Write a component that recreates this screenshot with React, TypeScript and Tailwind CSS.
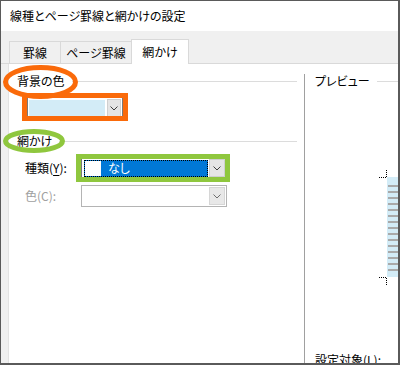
import React from "react";

function Chevron({ color = "#404040" }: { color?: string }) {
  return (
    <svg width="8" height="5" viewBox="0 0 8 5">
      <polyline points="0.5,0.5 4,4 7.5,0.5" fill="none" stroke={color} strokeWidth="1" />
    </svg>
  );
}

function SectionLabel({ label }: { label: string }) {
  return (
    <div className="flex h-[12px] items-center">
      <span className="shrink-0 whitespace-nowrap">{label}</span>
      <div className="ml-[7px] h-px flex-1 bg-[#dcdcdc]" />
    </div>
  );
}

function PagePreview() {
  const stripes = Array.from({ length: 15 }, (_, i) => 16 + i * 6);
  return (
    <svg width="20" height="118" className="ml-[64px] mt-[82px] shrink-0">
      <line x1="0" y1="8.5" x2="7" y2="8.5" stroke="#000" strokeDasharray="1 1" />
      <line x1="7.5" y1="1" x2="7.5" y2="8" stroke="#000" strokeDasharray="1 1" />
      <rect x="8" y="8" width="14" height="100" fill="#d3ecf7" />
      {stripes.map((y) => (
        <rect key={y} x="9" y={y} width="13" height="2" fill="#a9a9a9" />
      ))}
      <line x1="0" y1="108.5" x2="7" y2="108.5" stroke="#000" strokeDasharray="1 1" />
      <line x1="7.5" y1="109" x2="7.5" y2="117" stroke="#000" strokeDasharray="1 1" />
    </svg>
  );
}

export default function App() {
  return (
    <div className="relative flex h-[365px] w-[400px] flex-col overflow-hidden border border-b-2 border-r-2 border-[#5a5a5a] bg-[#f0f0f0] font-['Noto_Sans_CJK_JP',sans-serif] text-[12px] leading-none text-black [font-feature-settings:'palt']">
      {/* title bar */}
      <div className="flex h-[30px] shrink-0 items-center bg-white pl-[9px]">
        線種とページ罫線と網かけの設定
      </div>

      {/* tabs */}
      <div className="flex h-[33px] shrink-0 items-end border-b border-[#d9d9d9] pl-[8px]">
        <div className="flex h-[22px] w-[52px] items-center justify-center border border-b-0 border-[#d9d9d9]">
          罫線
        </div>
        <div className="flex h-[22px] w-[70px] items-center justify-center border-t border-[#d9d9d9]">
          ページ罫線
        </div>
        <div className="relative -mb-px flex h-[25px] w-[58px] items-center justify-center border border-b-0 border-[#d9d9d9] bg-white">
          網かけ
        </div>
      </div>

      {/* tab panel */}
      <div className="flex min-h-0 flex-1 pl-[7px]">
        <div className="flex flex-1 border-l border-[#e3e3e3] bg-white">
          {/* left column */}
          <div className="flex flex-1 flex-col pl-[8px] pr-[7px]">
            <div className="mt-[11px]">
              <SectionLabel label="背景の色" />
            </div>
            <div className="ml-[10px] mt-[10px] flex h-[22px] w-[96px] items-center border border-[#7a7a7a] p-px">
              <div className="h-[16px] w-[76px] bg-[#d3ecf7]" />
              <div className="ml-auto flex h-[18px] w-[14px] items-center justify-center border border-[#cfcfcf] bg-[#e5e5e5]">
                <Chevron />
              </div>
            </div>

            <div className="mt-[16px]">
              <SectionLabel label="網かけ" />
            </div>

            <div className="mt-[10px] flex items-center">
              <span className="ml-[8px] w-[56px]">
                種類(<span className="underline underline-offset-2">Y</span>):
              </span>
              <div className="flex h-[22px] w-[146px] items-center border border-[#7a7a7a] p-px">
                <div className="ml-px flex h-[17px] w-[124px] items-center border border-dotted border-black bg-[#0078d7]">
                  <div className="h-[15px] w-[16px] bg-white" />
                  <span className="ml-[7px] text-white">なし</span>
                </div>
                <div className="ml-auto flex h-[18px] w-[16px] items-center justify-center border border-[#cfcfcf] bg-[#e5e5e5]">
                  <Chevron />
                </div>
              </div>
            </div>

            <div className="mt-[6px] flex items-center">
              <span className="ml-[8px] w-[56px] text-[#a0a0a0]">色(C):</span>
              <div className="flex h-[22px] w-[146px] items-center border border-[#b4b4b4] bg-white p-px">
                <div className="ml-auto flex h-[18px] w-[16px] items-center justify-center border border-[#d6d6d6] bg-[#e8e8e8]">
                  <Chevron color="#6e6e6e" />
                </div>
              </div>
            </div>
          </div>

          {/* preview column */}
          <div className="mt-[10px] flex w-[94px] shrink-0 flex-col border-l border-[#a0a0a0] pl-[10px]">
            <div className="mt-px">
              <SectionLabel label="プレビュー" />
            </div>
            <PagePreview />
            <div className="mt-[67px] whitespace-nowrap">
              設定対象(<span className="underline underline-offset-2">L</span>):
            </div>
          </div>
        </div>
      </div>

      {/* annotation marks */}
      <svg className="pointer-events-none absolute left-[-1px] top-[-1px]" width="400" height="365">
        <ellipse cx="40.5" cy="82" rx="35" ry="14.5" fill="none" stroke="#fa6a0a" strokeWidth="5" />
        <rect x="24.5" y="95.5" width="101" height="23" fill="none" stroke="#fa6a0a" strokeWidth="5" />
        <ellipse cx="34" cy="141" rx="28.5" ry="9.5" fill="none" stroke="#8fc73e" strokeWidth="5" />
        <rect x="78.5" y="156.5" width="149" height="23" fill="none" stroke="#8fc73e" strokeWidth="5" />
      </svg>
    </div>
  );
}
